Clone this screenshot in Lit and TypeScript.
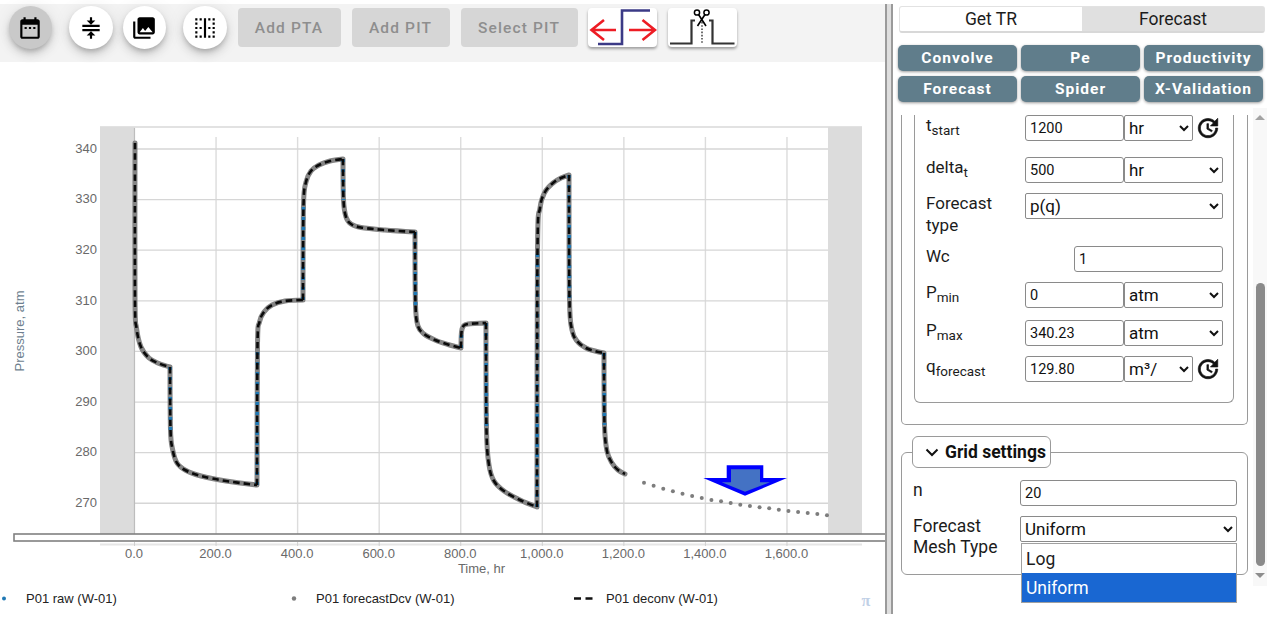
import { LitElement, html, css, svg } from "lit";
import { customElement } from "lit/decorators.js";

type P = [number, number];
const segments: P[][] = [
  [[135,143],[135,300],[136.5,328],[141,347],[149,358],[159,363.5],[170,367]],
  [[170,367],[170.5,430],[172.5,449],[177,463],[186,470.5],[201,476],[226,481],[257,485]],
  [[257,485],[257.5,345],[259.5,322],[264,312],[272,305],[285,301],[303,300]],
  [[303,300],[303.5,205],[306,182],[311,171],[319,165],[330,161],[343,159]],
  [[343,159],[343.5,200],[346,217],[351,224],[361,227.5],[385,230],[415,232]],
  [[415,232],[415.5,305],[418,326],[424,334],[435,340],[448,344.5],[461,348]],
  [[461,348],[461.5,332],[463.5,326],[468,324],[486,323]],
  [[486,323],[486.5,430],[489,465],[494,481],[504,491],[520,500],[537,507]],
  [[537,507],[537.5,250],[540,208],[545,192],[553,183],[561,178],[569,175]],
  [[569,175],[569.5,300],[572,330],[577,341],[586,348],[595,351],[604,353]],
  [[604,353],[604.5,425],[607,451],[612,463],[618,470],[625,474]],
];

function smooth(pts: P[]): string {
  let d = `M${pts[0][0]} ${pts[0][1]}`;
  for (let i = 0; i < pts.length - 1; i++) {
    const p0 = pts[Math.max(i - 1, 0)], p1 = pts[i], p2 = pts[i + 1], p3 = pts[Math.min(i + 2, pts.length - 1)];
    const k = i === 0 ? 0 : 1 / 6, k2 = i === pts.length - 2 ? 0 : 1 / 6;
    d += ` C${p1[0] + (p2[0] - p0[0]) * k} ${p1[1] + (p2[1] - p0[1]) * k} ${p2[0] - (p3[0] - p1[0]) * k2} ${p2[1] - (p3[1] - p1[1]) * k2} ${p2[0]} ${p2[1]}`;
  }
  return d;
}
const curve = segments.map(smooth).join(" ");
const steep = segments.slice(1).map((s) => `M${s[0][0]} ${s[0][1]}L${s[1][0]} ${s[1][1]}`).join(" ");
const dotsY = [128,137,146,154,161,168,174,180,184,189,194,198,202,205,209,213,216,219,222,226];
const X = (t: number) => 134.5 + 0.4078 * t;
const Y = (p: number) => 149 + (340 - p) * 5.061;

const ICON = {
  date: "M9 11H7v2h2v-2zm4 0h-2v2h2v-2zm4 0h-2v2h2v-2zm2-7h-1V2h-2v2H8V2H6v2H5c-1.11 0-1.99.9-1.99 2L3 20c0 1.1.89 2 2 2h14c1.1 0 2-.9 2-2V6c0-1.1-.9-2-2-2zm0 16H5V9h14v11z",
  compress: "M4 9v2h16V9H4zm16 6v-2H4v2h16zm-9 7h2v-3h3l-4-4-4 4h3v3zm2-20h-2v3H8l4 4 4-4h-3V2z",
  photos: "M22 16V4c0-1.1-.9-2-2-2H8c-1.1 0-2 .9-2 2v12c0 1.1.9 2 2 2h12c1.1 0 2-.9 2-2zm-11-4l2.03 2.71L16 11l4 5H8l3-4zM2 6v14c0 1.1.9 2 2 2h14v-2H4V6H2z",
  border: "M3 9h2V7H3v2zm0-4h2V3H3v2zm4 16h2v-2H7v2zm0-8h2v-2H7v2zm-4 0h2v-2H3v2zm0 8h2v-2H3v2zm0-4h2v-2H3v2zM7 5h2V3H7v2zm12 12h2v-2h-2v2zm-8 4h2V3h-2v18zm8 0h2v-2h-2v2zm0-8h2v-2h-2v2zm0-10v2h2V3h-2zm0 6h2V7h-2v2zm-4-4h2V3h-2v2zm0 16h2v-2h-2v2zm0-8h2v-2h-2v2z",
  update: "M21 10.12h-6.78l2.74-2.82c-2.73-2.7-7.15-2.8-9.88-.1-2.73 2.71-2.73 7.08 0 9.79s7.15 2.71 9.88 0C18.32 15.65 19 14.08 19 12.1h2c0 1.98-.88 4.55-2.64 6.29-3.51 3.48-9.21 3.48-12.72 0-3.5-3.47-3.53-9.11-.02-12.58s9.14-3.47 12.65 0L21 3v7.12zM12.5 8v4.25l3.5 2.08-.72 1.21L11 13V8h1.5z",
};

@customElement("app-root")
export class AppRoot extends LitElement {
  static styles = css`
    :host { display: block; width: 1267px; height: 624px; overflow: hidden; background: #fff; font-family: Roboto, "Liberation Sans", sans-serif; color: #1c1c1c; }
    .page { display: flex; height: 610px; margin-top: 4px; }
    .left { width: 885px; flex: none; display: flex; flex-direction: column; }
    .toolbar { height: 58px; background: #f3f3f3; display: flex; align-items: center; padding: 0 0 11px 8.5px; box-sizing: border-box; flex: none; }
    .fab { width: 43.5px; height: 43.5px; border-radius: 50%; background: #fff; border: 0; padding: 0; display: flex; align-items: center; justify-content: center; box-shadow: 0 3px 5px -1px rgba(0,0,0,.2), 0 6px 10px 0 rgba(0,0,0,.12), 0 1px 18px 0 rgba(0,0,0,.08); flex: none; }
    .fab.on { background: #c9c9c9; }
    .fab svg { width: 26px; height: 26px; fill: #000; }
    .ml11 { margin-left: 11px; }
    .ml17 { margin-left: 17px; }
    .ml10 { margin-left: 10px; }
    .dis { height: 39px; border: 0; border-radius: 4px; background: #d6d6d6; color: #8e8e8e; font: 500 15.5px Roboto, sans-serif; letter-spacing: 1.15px; flex: none; padding: 0; }
    .w103 { width: 103px; }
    .w98 { width: 98px; }
    .w117 { width: 117px; }
    .ic { width: 69px; height: 39px; border: 0; border-radius: 4px; background: #fff; padding: 0; box-shadow: 0 2px 3px rgba(0,0,0,.35); flex: none; }
    .ic svg { display: block; width: 69px; height: 39px; }
    .chart { display: block; width: 885px; height: 552px; flex: none; }
    .chart text { font-family: "Liberation Sans", Arial, sans-serif; }
    .tk { font-size: 13px; fill: #696969; }
    .lg { font-size: 13px; fill: #222; }
    .splitter { width: 8px; flex: none; box-sizing: border-box; border-left: 2px solid #9a9a9a; border-right: 2px solid #9a9a9a; background: #dedede; }
    .right { flex: 1; min-width: 0; display: flex; flex-direction: column; }
    .tabs { display: flex; margin: 2px 2px 0 6px; height: 27px; flex: none; border: 1px solid #e2e2e2; border-bottom: 2px solid #d8d8d8; border-radius: 3px; box-sizing: border-box; }
    .tab { flex: 1; display: flex; align-items: center; justify-content: center; font-size: 17.5px; }
    .tab.off { background: #e0e0e0; }
    .btns { display: grid; grid-template-columns: repeat(3, 119px); grid-auto-rows: 26px; gap: 5px 4px; margin: 12px 0 0 5px; flex: none; }
    .btn { border: 0; border-radius: 5px; background: #607d8b; color: #fff; font: 700 15.5px Roboto, sans-serif; letter-spacing: 1px; padding: 0; box-shadow: 0 1px 3px rgba(0,0,0,.4); }
    .scrollwrap { display: flex; margin-top: 6px; height: 478px; flex: none; }
    .content { width: 360px; flex: none; padding: 7px 0 0 8px; box-sizing: border-box; }
    .outer { width: 347px; box-sizing: border-box; border: 1px solid #9a9a9a; border-top: 0; border-radius: 0 0 5px 5px; padding: 0 14px 22px 12px; height: 310px; }
    .inner { width: 320px; box-sizing: border-box; border: 1px solid #9a9a9a; border-top: 0; border-radius: 0 0 6px 6px; padding: 0 0 20px 11px; }
    .row { display: flex; align-items: flex-start; }
    .lab { width: 99px; flex: none; font-size: 17px; line-height: 21.5px; }
    sub { font-size: 13.5px; line-height: 0; vertical-align: -4px; }
    .inp { box-sizing: border-box; height: 26px; border: 1px solid #8a8a8a; border-radius: 3px; padding: 0 4px; font: 14.5px Roboto, sans-serif; color: #111; background: #fff; outline: 0; min-width: 0; }
    .sel { box-sizing: border-box; height: 26px; border: 1px solid #8a8a8a; border-radius: 2px; font: 17px Roboto, sans-serif; color: #111; background: #fff; outline: 0; min-width: 0; }
    .i98 { width: 99px; }
    .s69 { width: 69px; }
    .s99 { width: 99px; }
    .full { width: 198px; }
    .wc { width: 149px; margin-left: 49px; }
    .up { width: 26px; height: 26px; fill: #111; stroke: #111; stroke-width: .6; margin-left: 2px; flex: none; }
    .m16 { margin-bottom: 16px; }
    .m10 { margin-bottom: 10px; }
    .m12 { margin-bottom: 12px; }
    .grid { width: 347px; box-sizing: border-box; height: 123px; margin-top: 27px; border: 1px solid #9a9a9a; border-radius: 6px; }
    .legend { width: 139px; height: 32px; box-sizing: border-box; margin: -17px 0 12px 10px; border: 1px solid #9a9a9a; border-radius: 6px; background: #fff; display: flex; align-items: center; padding-left: 12px; gap: 6px; font: 700 17.5px Roboto, sans-serif; color: #111; }
    .legend svg { width: 14px; height: 9px; fill: none; stroke: #111; stroke-width: 2; flex: none; }
    .grow { padding-left: 11px; }
    .glab { width: 107px; flex: none; font-size: 17.5px; line-height: 21px; }
    .gw { width: 217px; }
    .selwrap { position: relative; }
    .menu { position: absolute; left: 1px; top: 27px; width: 216px; box-sizing: border-box; border: 1px solid #a0a0a0; background: #fff; font-size: 17.5px; z-index: 2; }
    .opt { height: 29px; display: flex; align-items: center; padding-left: 4px; }
    .opt.sel-on { background: #1967d2; color: #fff; }
    .sb { width: 14px; flex: none; background: #f8f8f8; display: flex; flex-direction: column; align-items: center; height: 478px; }
    .tri { width: 0; height: 0; border-left: 5.5px solid transparent; border-right: 5.5px solid transparent; flex: none; }
    .tri.a { border-bottom: 5px solid #a3a3a3; margin-top: 7px; }
    .tri.b { border-top: 5px solid #8d8d8d; margin-top: 7px; }
    .thumb { width: 9px; height: 283px; margin-top: 163px; border-radius: 5px; background: #8a8a8a; flex: none; }
  `;

  private chart() {
    const xt = [0, 200, 400, 600, 800, 1000, 1200, 1400, 1600];
    const yt = [340, 330, 320, 310, 300, 290, 280, 270];
    const fmt = (t: number) => t.toLocaleString("en-US") + ".0";
    return svg`
      <rect x="100" y="126" width="762" height="2" fill="#e2e2e2"/>
      <rect x="100" y="127" width="35" height="407" fill="#dcdcdc"/>
      <rect x="828" y="127" width="34" height="407" fill="#dcdcdc"/>
      ${xt.slice(1).map((t) => svg`<line x1=${X(t)} x2=${X(t)} y1="137" y2="534" stroke="#dcdcdc" stroke-width="1.4"/>`)}
      ${yt.map((p) => svg`<line x1="135" x2="828" y1=${Y(p)} y2=${Y(p)} stroke="#d6d6d6" stroke-width="1.3"/>`)}
      <line x1="134.5" x2="134.5" y1="128" y2="534" stroke="#bdbdbd" stroke-width="1.2"/>
      <path d=${curve} fill="none" stroke="#848484" stroke-width="5" stroke-linejoin="round" stroke-linecap="round"/>
      <path d=${steep} fill="none" stroke="#1f78b4" stroke-width="3.6" stroke-dasharray="3 7"/>
      <path d=${curve} fill="none" stroke="#0a0a0a" stroke-width="2.6" stroke-dasharray="6.5 4"/>
      ${dotsY.map((y, i) => svg`<circle cx=${644 + 9.63 * i} cy=${440 + y / 3} r="2" fill="#7d7d7d"/>`)}
      <polygon points="726.7,465.3 763.3,465.3 763.3,478 787,478 745,495.7 703.3,478 726.7,478" fill="#0000ff"/>
      <polygon points="731,469.3 760,469.3 760,482.3 770,482.3 745,491.7 721.7,482.3 731,482.3" fill="#4472c4"/>
      <rect x="14" y="534" width="880" height="7" fill="#fff" stroke="#808080" stroke-width="1.6"/>
      <rect x="100" y="543.5" width="762" height="2" fill="#e6e6e6"/>
      ${xt.map((t) => svg`<line x1=${X(t)} x2=${X(t)} y1="542" y2="546" stroke="#d0d0d0"/>`)}
      ${yt.map((p) => svg`<text class="tk" x="97" y=${Y(p) + 3.8} text-anchor="end">${p}</text>`)}
      ${xt.map((t) => svg`<text class="tk" x=${X(t) - 0.5} y="557.5" text-anchor="middle">${fmt(t)}</text>`)}
      <text class="tk" x="481.5" y="573" text-anchor="middle">Time, hr</text>
      <text class="tk" x="0" y="0" text-anchor="middle" transform="translate(23.5 331) rotate(-90)" style="fill:#6e7f8f">Pressure, atm</text>
      <circle cx="4" cy="598.5" r="2" fill="#1f78b4"/>
      <text class="lg" x="26" y="603">P01 raw (W-01)</text>
      <circle cx="294" cy="598.5" r="2.2" fill="#7d7d7d"/>
      <text class="lg" x="316" y="603">P01 forecastDcv (W-01)</text>
      <line x1="574" x2="596" y1="598.5" y2="598.5" stroke="#111" stroke-width="2.4" stroke-dasharray="7 4.5"/>
      <text class="lg" x="606" y="603">P01 deconv (W-01)</text>
      <text x="866" y="606" text-anchor="middle" font-size="16" font-weight="700" fill="#bfd0e6" style="font-family:'Liberation Serif',serif">π</text>
    `;
  }

  private unitRow(label: unknown, value: string, unit: string, short: boolean, cls: string) {
    return html`<div class="row ${cls}">
      <div class="lab">${label}</div>
      <input class="inp i98" .value=${value} />
      <select class="sel ${short ? "s69" : "s99"}"><option>${unit}</option></select>
      ${short ? html`<svg class="up" viewBox="0 0 24 24"><path d=${ICON.update} /></svg>` : ""}
    </div>`;
  }

  render() {
    return html`<div class="page">
      <div class="left">
        <div class="toolbar">
          <button class="fab on"><svg viewBox="0 0 24 24"><path d=${ICON.date} /></svg></button>
          <button class="fab ml17"><svg viewBox="0 0 24 24"><path d=${ICON.compress} /></svg></button>
          <button class="fab ml10"><svg viewBox="0 0 24 24"><path d=${ICON.photos} /></svg></button>
          <button class="fab ml17"><svg viewBox="0 0 24 24"><path d=${ICON.border} /></svg></button>
          <button class="dis w103 ml11">Add PTA</button>
          <button class="dis w98 ml11">Add PIT</button>
          <button class="dis w117 ml11">Select PIT</button>
          <button class="ic ml10">
            <svg viewBox="0 0 69 39" fill="none">
              <path d="M10 36H34V2.5H62" stroke="#3b3a86" stroke-width="2.6"/>
              <path d="M28 22H4.5M16 12 3.5 22 16 32" stroke="#ed1c24" stroke-width="2.6"/>
              <path d="M41 22H66M54.5 12 67 22 54.5 32" stroke="#ed1c24" stroke-width="2.6"/>
            </svg>
          </button>
          <button class="ic ml11">
            <svg viewBox="0 0 69 39" fill="none">
              <path d="M2 35.5H23.5V12.5H27M41 12.5H44.5V35.5H66.5" stroke="#333" stroke-width="2.2"/>
              <path d="M34 14V36" stroke="#333" stroke-width="1.4" stroke-dasharray="1.6 1.6"/>
              <circle cx="29" cy="4.5" r="2.6" stroke="#000" stroke-width="1.5"/>
              <circle cx="38.5" cy="4.5" r="2.6" stroke="#000" stroke-width="1.5"/>
              <path d="M30.5 6.5 38 18M37 6.5 29.5 18" stroke="#000" stroke-width="1.6"/>
            </svg>
          </button>
        </div>
        <svg class="chart" viewBox="0 62 885 552">${this.chart()}</svg>
      </div>
      <div class="splitter"></div>
      <div class="right">
        <div class="tabs"><div class="tab">Get TR</div><div class="tab off">Forecast</div></div>
        <div class="btns">
          ${["Convolve", "Pe", "Productivity", "Forecast", "Spider", "X-Validation"].map((b) => html`<button class="btn">${b}</button>`)}
        </div>
        <div class="scrollwrap">
          <div class="content">
            <div class="outer">
              <div class="inner">
                ${this.unitRow(html`t<sub>start</sub>`, "1200", "hr", true, "m16")}
                ${this.unitRow(html`delta<sub>t</sub>`, "500", "hr", false, "m10")}
                <div class="row m10">
                  <div class="lab">Forecast<br />type</div>
                  <select class="sel full"><option>p(q)</option></select>
                </div>
                <div class="row m10"><div class="lab">Wc</div><input class="inp wc" .value=${"1"} /></div>
                ${this.unitRow(html`P<sub>min</sub>`, "0", "atm", false, "m12")}
                ${this.unitRow(html`P<sub>max</sub>`, "340.23", "atm", false, "m10")}
                ${this.unitRow(html`q<sub>forecast</sub>`, "129.80", "m³/", true, "")}
              </div>
            </div>
            <div class="grid">
              <div class="legend">
                <svg viewBox="0 0 14 9"><path d="M1.5 1.5 7 7l5.5-5.5" /></svg>
                <span>Grid settings</span>
              </div>
              <div class="row grow m10">
                <div class="glab">n</div>
                <input class="inp gw" .value=${"20"} />
              </div>
              <div class="row grow">
                <div class="glab">Forecast<br />Mesh Type</div>
                <div class="selwrap">
                  <select class="sel gw"><option>Uniform</option></select>
                  <div class="menu">
                    <div class="opt">Log</div>
                    <div class="opt sel-on">Uniform</div>
                  </div>
                </div>
              </div>
            </div>
          </div>
          <div class="sb">
            <div class="tri a"></div>
            <div class="thumb"></div>
            <div class="tri b"></div>
          </div>
        </div>
      </div>
    </div>`;
  }
}
